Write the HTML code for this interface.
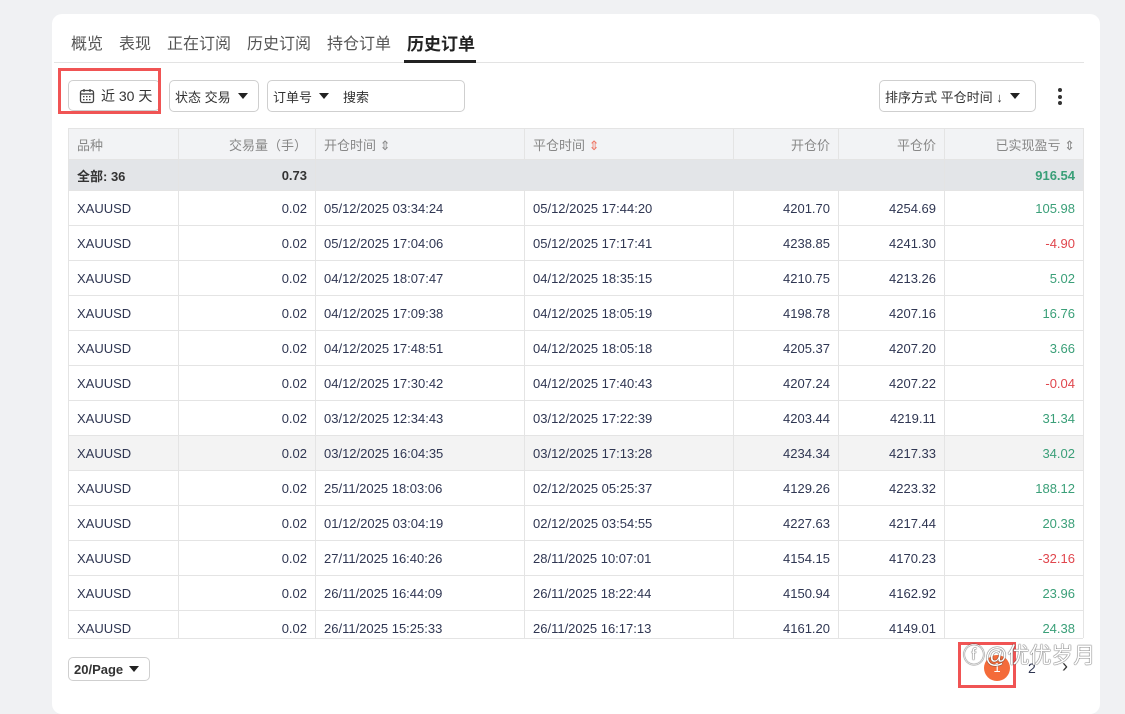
<html><head><style>
body{margin:0;width:1125px;height:694px;background:#f0f1f3;font-family:"Liberation Sans","Noto Sans CJK SC",sans-serif;overflow:hidden;position:relative}
.card{position:absolute;left:52px;top:14px;width:1048px;height:700px;background:#fff;border-radius:10px}
.tabs{position:absolute;left:19px;top:16px;font-size:16px;color:#555}
.tabs span{position:absolute;white-space:nowrap;top:0}
.tl{position:absolute;left:2px;top:48px;width:1030px;height:1px;background:#e3e3e3}
.ul{position:absolute;left:352px;top:46px;width:72px;height:3px;background:#222}
.box{position:absolute;border:1px solid #cfcfcf;border-radius:5px;font-size:13px;color:#333;white-space:nowrap;box-sizing:border-box;display:flex;align-items:center}
.tri{display:inline-block;width:0;height:0;border-left:5px solid transparent;border-right:5px solid transparent;border-top:6px solid #222;margin-left:7px}
table{position:absolute;left:68px;top:128px;border-collapse:collapse;font-size:13px;color:#2f3652}
td{height:35px;border:1px solid #e4e4e4;padding:0 8px;white-space:nowrap}
tr.h td{height:31px;background:#f2f3f5;color:#888}
tr.s td{height:31px;background:#e3e5e8;font-weight:bold;color:#333}
tr.g td{background:#f3f3f3}
.r{text-align:right}td.gr,tr.s td.gr{color:#3a9f78}td.rd{color:#e0464d}
</style></head><body>
<div class="card">
<div class="tabs"><span style="left:0">概览</span><span style="left:48px">表现</span><span style="left:96px">正在订阅</span><span style="left:176px">历史订阅</span><span style="left:256px">持仓订单</span><span style="left:336px;color:#222;font-weight:bold;font-size:17px">历史订单</span></div>
<div class="tl"></div><div class="ul"></div>
</div>
<div class="box" style="left:68px;top:80px;width:92px;height:31px;padding-left:10px;font-size:14px"><svg width="16" height="16" viewBox="0 0 16 16" style="margin-right:6px"><rect x="1.5" y="2.5" width="13" height="12" rx="2" fill="none" stroke="#444" stroke-width="1.3"/><line x1="1.5" y1="6" x2="14.5" y2="6" stroke="#444" stroke-width="1.3"/><line x1="5" y1="1" x2="5" y2="4" stroke="#444" stroke-width="1.3"/><line x1="11" y1="1" x2="11" y2="4" stroke="#444" stroke-width="1.3"/><g fill="#444"><rect x="4" y="8" width="1.5" height="1.3"/><rect x="7" y="8" width="1.5" height="1.3"/><rect x="10" y="8" width="1.5" height="1.3"/><rect x="4" y="11" width="1.5" height="1.3"/><rect x="7" y="11" width="1.5" height="1.3"/><rect x="10" y="11" width="1.5" height="1.3"/></g></svg>近 30 天</div>
<div style="position:absolute;left:58px;top:68px;width:103px;height:46px;border:3px solid #f05454;box-sizing:border-box"></div>
<div class="box" style="left:169px;top:80px;width:90px;height:32px;padding-left:5px">状态 交易<span class="tri"></span></div>
<div class="box" style="left:267px;top:80px;width:198px;height:32px;padding-left:5px">订单号<span class="tri"></span><span style="margin-left:14px">搜索</span></div>
<div class="box" style="left:879px;top:80px;width:157px;height:32px;padding-left:5px">排序方式 平仓时间 ↓<span class="tri"></span></div>
<div style="position:absolute;left:1058px;top:88px;width:4px"><div style="width:4px;height:4px;border-radius:2px;background:#333;margin-bottom:2.5px"></div><div style="width:4px;height:4px;border-radius:2px;background:#333;margin-bottom:2.5px"></div><div style="width:4px;height:4px;border-radius:2px;background:#333"></div></div>
<table>
<colgroup><col style="width:110px"><col style="width:137px"><col style="width:209px"><col style="width:209px"><col style="width:105px"><col style="width:106px"><col style="width:139px"></colgroup>
<tr class="h"><td>品种</td><td class="r">交易量（手）</td><td>开仓时间 ⇕</td><td>平仓时间 <span style="color:#e76">⇕</span></td><td class="r">开仓价</td><td class="r">平仓价</td><td class="r">已实现盈亏 ⇕</td></tr>
<tr class="s"><td>全部: 36</td><td class="r">0.73</td><td colspan="4" style="border-right:none"></td><td class="r gr">916.54</td></tr>
<tr><td>XAUUSD</td><td class="r">0.02</td><td>05/12/2025 03:34:24</td><td>05/12/2025 17:44:20</td><td class="r">4201.70</td><td class="r">4254.69</td><td class="r gr">105.98</td></tr>
<tr><td>XAUUSD</td><td class="r">0.02</td><td>05/12/2025 17:04:06</td><td>05/12/2025 17:17:41</td><td class="r">4238.85</td><td class="r">4241.30</td><td class="r rd">-4.90</td></tr>
<tr><td>XAUUSD</td><td class="r">0.02</td><td>04/12/2025 18:07:47</td><td>04/12/2025 18:35:15</td><td class="r">4210.75</td><td class="r">4213.26</td><td class="r gr">5.02</td></tr>
<tr><td>XAUUSD</td><td class="r">0.02</td><td>04/12/2025 17:09:38</td><td>04/12/2025 18:05:19</td><td class="r">4198.78</td><td class="r">4207.16</td><td class="r gr">16.76</td></tr>
<tr><td>XAUUSD</td><td class="r">0.02</td><td>04/12/2025 17:48:51</td><td>04/12/2025 18:05:18</td><td class="r">4205.37</td><td class="r">4207.20</td><td class="r gr">3.66</td></tr>
<tr><td>XAUUSD</td><td class="r">0.02</td><td>04/12/2025 17:30:42</td><td>04/12/2025 17:40:43</td><td class="r">4207.24</td><td class="r">4207.22</td><td class="r rd">-0.04</td></tr>
<tr><td>XAUUSD</td><td class="r">0.02</td><td>03/12/2025 12:34:43</td><td>03/12/2025 17:22:39</td><td class="r">4203.44</td><td class="r">4219.11</td><td class="r gr">31.34</td></tr>
<tr class="g"><td>XAUUSD</td><td class="r">0.02</td><td>03/12/2025 16:04:35</td><td>03/12/2025 17:13:28</td><td class="r">4234.34</td><td class="r">4217.33</td><td class="r gr">34.02</td></tr>
<tr><td>XAUUSD</td><td class="r">0.02</td><td>25/11/2025 18:03:06</td><td>02/12/2025 05:25:37</td><td class="r">4129.26</td><td class="r">4223.32</td><td class="r gr">188.12</td></tr>
<tr><td>XAUUSD</td><td class="r">0.02</td><td>01/12/2025 03:04:19</td><td>02/12/2025 03:54:55</td><td class="r">4227.63</td><td class="r">4217.44</td><td class="r gr">20.38</td></tr>
<tr><td>XAUUSD</td><td class="r">0.02</td><td>27/11/2025 16:40:26</td><td>28/11/2025 10:07:01</td><td class="r">4154.15</td><td class="r">4170.23</td><td class="r rd">-32.16</td></tr>
<tr><td>XAUUSD</td><td class="r">0.02</td><td>26/11/2025 16:44:09</td><td>26/11/2025 18:22:44</td><td class="r">4150.94</td><td class="r">4162.92</td><td class="r gr">23.96</td></tr>
<tr><td>XAUUSD</td><td class="r">0.02</td><td>26/11/2025 15:25:33</td><td>26/11/2025 16:17:13</td><td class="r">4161.20</td><td class="r">4149.01</td><td class="r gr">24.38</td></tr>
</table>
<div style="position:absolute;left:52px;top:638px;width:1048px;height:56px;background:#fff"></div>
<div style="position:absolute;left:1100px;top:0;width:25px;height:694px;background:#f0f1f3"></div>
<div style="position:absolute;left:68px;top:638px;width:1015px;height:1px;background:#e4e4e4"></div>
<div class="box" style="left:68px;top:657px;width:82px;height:24px;padding-left:5px;font-weight:bold;font-size:13px">20/Page<span class="tri" style="margin-left:6px"></span></div>
<div style="position:absolute;left:958px;top:642px;width:58px;height:46px;border:3px solid #f05454;box-sizing:border-box"></div>
<div style="position:absolute;left:984px;top:655px;width:26px;height:26px;border-radius:13px;background:#f46b3a;color:#fff;font-size:13px;text-align:center;line-height:26px">1</div>
<div style="position:absolute;left:1028px;top:660px;font-size:14px;color:#2f3652">2</div>
<div style="position:absolute;left:1062px;top:656px;font-size:18px;color:#333">›</div>
<div style="position:absolute;left:963px;top:638px;font-size:22px;color:#fff;text-shadow:0 0 1px #333,0 0 1px #333">ⓕ@优优岁月</div>
</body></html>
